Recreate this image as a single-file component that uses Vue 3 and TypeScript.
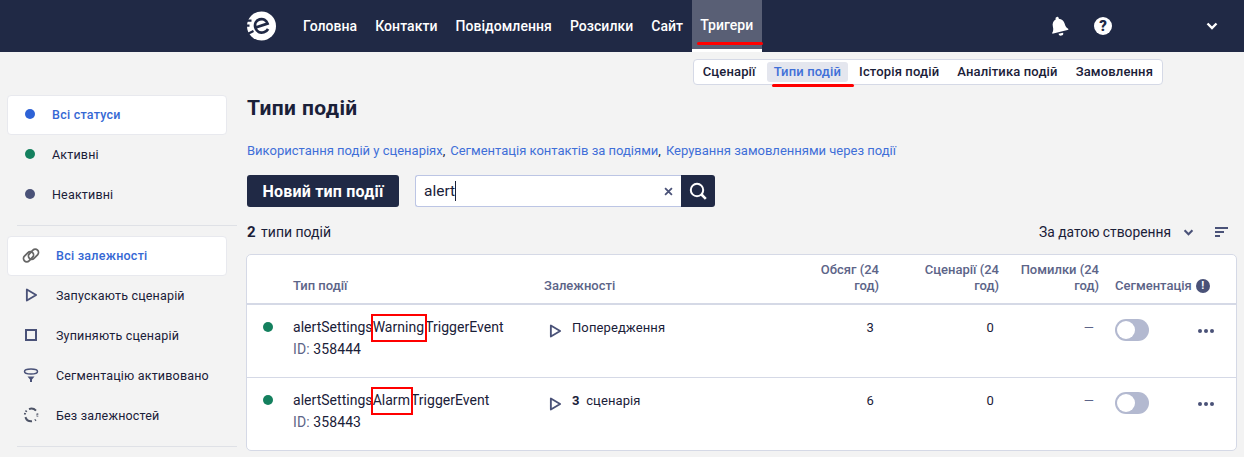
<script setup lang="ts">
// Trigger event types page: top nav, status/dependency filters, results table.
interface FilterItem {
  label: string;
  icon: string;
  active?: boolean;
}

interface EventRow {
  before: string;
  match: string;
  after: string;
  id: number;
  volume: number;
  scenarios: number;
}

const mainNav = ["Головна", "Контакти", "Повідомлення", "Розсилки", "Сайт"];
const subNav = ["Сценарії", "Типи подій", "Історія подій", "Аналітика подій", "Замовлення"];

const statuses: FilterItem[] = [
  { label: "Всі статуси", icon: "blue", active: true },
  { label: "Активні", icon: "green" },
  { label: "Неактивні", icon: "slate" },
];

const dependencies: FilterItem[] = [
  { label: "Всі залежності", icon: "link", active: true },
  { label: "Запускають сценарій", icon: "play" },
  { label: "Зупиняють сценарій", icon: "stop" },
  { label: "Сегментацію активовано", icon: "funnel" },
  { label: "Без залежностей", icon: "none" },
];

const rows: EventRow[] = [
  { before: "alertSettings", match: "Warning", after: "TriggerEvent", id: 358444, volume: 3, scenarios: 0 },
  { before: "alertSettings", match: "Alarm", after: "TriggerEvent", id: 358443, volume: 6, scenarios: 0 },
];
</script>

<template>
  <div class="page">
    <header class="topbar">
      <div class="topbar-inner">
        <svg class="logo" viewBox="0 0 32 32" width="32" height="32">
          <circle cx="16.500" cy="16" r="14.500" fill="#fff" />
          <g transform="rotate(-18 17 16)" fill="none" stroke="#202945" stroke-width="2.800">
            <path d="M10.500 15.500h12.500c0-4-2.700-6.500-6.300-6.500-3.800 0-6.500 2.900-6.500 6.800 0 4 2.800 6.700 6.700 6.700 2 0 3.600-.6 5-1.800" />
          </g>
          <path d="M0 9.500h6.500v2.200H0zM0 14.500h4.500v2.200H0zM1 23.500l7-3.500 1 2-7 3.500z" fill="#202945" />
        </svg>
        <nav class="main-nav">
          <a v-for="item in mainNav" :key="item">{{ item }}</a>
          <a class="current">Тригери<span class="mark-line nav-mark"></span></a>
        </nav>
        <div class="top-icons">
          <svg class="bell" viewBox="0 0 20 20" width="22" height="22">
            <g transform="rotate(-14 10 10)">
              <path d="M10 1.500a1.500 1.500 0 0 1 1.500 1.500v.5c2.600.7 4 2.900 4 5.500 0 3 .8 4.300 2 5.500v.8H2.500V14.500c1.200-1.200 2-2.500 2-5.500 0-2.600 1.400-4.800 4-5.500V3A1.500 1.500 0 0 1 10 1.500z" fill="#fff" />
              <path d="M7.800 16.800h4.400a2.200 2.200 0 0 1-4.400 0z" fill="#fff" />
            </g>
          </svg>
          <span class="help">?</span>
          <svg class="chevron-top" viewBox="0 0 12 8" width="12" height="8">
            <path d="M1.500 1.500 6 6l4.500-4.500" fill="none" stroke="#fff" stroke-width="2.400" />
          </svg>
        </div>
      </div>
    </header>

    <div class="subnav-row">
      <nav class="sub-nav">
        <a v-for="item in subNav" :key="item" :class="{ current: item === 'Типи подій' }">
          {{ item }}
          <span v-if="item === 'Типи подій'" class="mark-line sub-mark"></span>
        </a>
      </nav>
    </div>

    <div class="layout">
      <aside class="sidebar">
        <ul class="filter-list">
          <li v-for="f in statuses" :key="f.label" class="filter" :class="{ active: f.active }">
            <span class="dot" :class="f.icon"></span>
            <span>{{ f.label }}</span>
          </li>
        </ul>
        <hr class="divider" />
        <ul class="filter-list">
          <li v-for="f in dependencies" :key="f.label" class="filter dep" :class="{ active: f.active }">
            <span class="dep-icon">
              <svg v-if="f.icon === 'link'" viewBox="0 0 18 16" width="19" height="17" fill="none" stroke="#666" stroke-width="1.800">
                <rect x="0.800" y="6" width="11.500" height="6.500" rx="3.250" transform="rotate(-45 6.500 9.250)" />
                <rect x="5.700" y="3.500" width="11.500" height="6.500" rx="3.250" transform="rotate(-45 11.500 6.750)" />
              </svg>
              <svg v-else-if="f.icon === 'play'" viewBox="0 0 14 16" width="13" height="16" fill="none" stroke="#4a5278" stroke-width="2">
                <path d="M2 2v12l10-6z" stroke-linejoin="round" />
              </svg>
              <svg v-else-if="f.icon === 'stop'" viewBox="0 0 12 12" width="12" height="12" fill="none" stroke="#4a5278" stroke-width="2">
                <rect x="1" y="1" width="10" height="10" />
              </svg>
              <svg v-else-if="f.icon === 'funnel'" viewBox="0 0 16 16" width="16" height="16" fill="none" stroke="#4a5278">
                <ellipse cx="8" cy="4.500" rx="6.500" ry="2.500" stroke-width="1.500" />
                <path d="M4.500 9.500h7L9 12.500V15H7v-2.500z" fill="#4a5278" stroke="none" />
              </svg>
              <svg v-else viewBox="0 0 16 16" width="16" height="16" fill="none" stroke="#4d5366" stroke-width="2">
                <path d="M6 2.100A6.300 6.300 0 0 1 13 3.700" />
                <path d="M14.200 6.500a6.300 6.300 0 0 1 0 3" stroke-dasharray="1.200 1" />
                <path d="M12.800 12.600a6.300 6.300 0 0 1-1.800 1.300" stroke-dasharray="1.200 1" />
                <path d="M9 14.300a6.300 6.300 0 0 1-6.600-4.200" />
                <path d="M1.900 7.500a6.300 6.300 0 0 1 2.400-4.500" stroke-dasharray="1.500 1.200" />
              </svg>
            </span>
            <span>{{ f.label }}</span>
          </li>
        </ul>
        <hr class="divider" />
      </aside>

      <main class="content">
        <h1>Типи подій</h1>
        <p class="links">
          <a>Використання подій у сценаріях</a><b>,</b>
          <a>Сегментація контактів за подіями</a><b>,</b>
          <a>Керування замовленнями через події</a>
        </p>

        <div class="actions">
          <button class="primary">Новий тип події</button>
          <div class="search">
            <div class="search-field">
              <span class="search-text">alert</span><span class="caret"></span>
              <svg class="clear" viewBox="0 0 10 10" width="9" height="9">
                <path d="M1.200 1.200l7.600 7.600M8.800 1.200 1.200 8.800" stroke="#4a5278" stroke-width="2" />
              </svg>
            </div>
            <button class="search-btn" aria-label="search">
              <svg viewBox="0 0 18 18" width="18" height="18" fill="none" stroke="#fff" stroke-width="2">
                <circle cx="8" cy="8" r="6.200" />
                <path d="m12.500 12.500 4.300 4.300" stroke-width="2.600" />
              </svg>
            </button>
          </div>
        </div>

        <div class="summary">
          <span><b>2</b> типи подій</span>
          <div class="sort">
            <span>За датою створення</span>
            <svg viewBox="0 0 12 8" width="11" height="7">
              <path d="M1.500 1.500 6 6l4.500-4.500" fill="none" stroke="#4a5278" stroke-width="2.400" />
            </svg>
            <svg class="sort-lines" viewBox="0 0 14 10" width="14" height="10">
              <path d="M0 1h13M0 5h9M0 9h5" stroke="#4a5278" stroke-width="1.800" />
            </svg>
          </div>
        </div>

        <section class="table">
          <div class="grid head">
            <span></span>
            <span>Тип події</span>
            <span>Залежності</span>
            <span class="num narrow">Обсяг (24 год)</span>
            <span class="num">Сценарії (24 год)</span>
            <span class="num narrow">Помилки (24 год)</span>
            <span class="seg-head">Сегментація
              <span class="info">!</span>
            </span>
            <span></span>
          </div>
          <div v-for="row in rows" :key="row.id" class="grid row">
            <span class="dot green row-dot"></span>
            <div>
              <div class="event-name">{{ row.before }}<span class="hit">{{ row.match }}</span>{{ row.after }}</div>
              <div class="event-id"><span>ID:</span> {{ row.id }}</div>
            </div>
            <div class="dep-cell">
              <svg viewBox="0 0 14 16" width="13" height="16" fill="none" stroke="#4a5278" stroke-width="2">
                <path d="M2 2v12l10-6z" stroke-linejoin="round" />
              </svg>
              <span v-if="row.id === 358444">Попередження</span>
              <span v-else><b>3</b>&nbsp; сценарія</span>
            </div>
            <span class="value vol">{{ row.volume }}</span>
            <span class="value scen">{{ row.scenarios }}</span>
            <span class="value err">—</span>
            <span class="toggle"><span class="knob"></span></span>
            <span class="more"><i></i><i></i><i></i></span>
          </div>
        </section>
      </main>
    </div>
  </div>
</template>

<style>
html,
body {
  margin: 0;
  background: #f3f3f3;
  overflow: hidden;
}
</style>

<style scoped>
.page {
  font-family: Roboto, "Noto Sans", sans-serif;
  font-size: 13px;
  color: #1a2038;
  height: 457px;
  overflow: hidden;
}
.topbar {
  background: #202945;
  height: 52px;
}
.topbar-inner {
  display: flex;
  align-items: center;
  height: 52px;
  padding-left: 245px;
}
.logo {
  flex: none;
}
.main-nav {
  display: flex;
  height: 52px;
  margin-left: 26px;
  gap: 18px;
  align-items: stretch;
}
.main-nav a {
  display: flex;
  align-items: center;
  color: #fff;
  font-weight: 500;
  font-size: 14px;
  letter-spacing: 0.05px;
}
.main-nav a.current {
  position: relative;
  box-sizing: border-box;
  flex: none;
  width: 70px;
  background: #595f75;
  padding: 0 8px;
  margin-left: -9px;
  height: 49px;
  box-shadow: 0 3px 0 #fff;
}
.mark-line {
  position: absolute;
  display: block;
  height: 3px;
  background: #f00;
  border-radius: 2px;
}
.nav-mark {
  left: 5px;
  top: 42px;
  width: 66px;
}
.top-icons {
  display: flex;
  align-items: center;
  margin-left: auto;
  padding-right: 26px;
}
.bell {
  margin-right: 24px;
}
.help {
  width: 18px;
  height: 18px;
  border-radius: 50%;
  background: #fff;
  color: #202945;
  font-weight: 900;
  font-size: 15px;
  line-height: 18px;
  text-align: center;
  margin-right: 94px;
}
.subnav-row {
  display: flex;
  justify-content: flex-end;
  padding: 7px 81px 0 0;
}
.sub-nav {
  display: flex;
  align-items: center;
  height: 24px;
  padding: 0 1px;
  background: #fff;
  border: 1px solid #d5d9e6;
  border-radius: 4px;
}
.sub-nav a {
  position: relative;
  font-size: 13px;
  font-weight: 500;
  line-height: 20px;
  padding: 0 9px;
  border-radius: 3px;
  letter-spacing: 0.15px;
}
.sub-nav a:first-child {
  padding: 0 11px 0 8px;
}
.sub-nav a:last-child {
  padding-right: 8px;
}
.sub-nav a.current {
  background: #e4e6ee;
  color: #3f6fd8;
  padding: 0 7px;
  margin-right: 2px;
}
.sub-mark {
  left: 5px;
  top: 22px;
  width: 82px;
}
.layout {
  display: flex;
  margin-top: 10px;
}
.sidebar {
  width: 220px;
  margin-left: 7px;
  flex: none;
}
.filter-list {
  list-style: none;
  margin: 0;
  padding: 0;
}
.filter {
  display: flex;
  align-items: center;
  gap: 17px;
  height: 40px;
  padding: 0 0 2px 18px;
  box-sizing: border-box;
  border-radius: 4px;
  font-size: 12.500px;
  letter-spacing: 0.18px;
}
.filter.dep {
  padding-left: 15px;
  gap: 16px;
}
.filter.active {
  background: #fff;
  border: 1px solid #e8e9ee;
  color: #3568d4;
  font-weight: 500;
  padding-left: 17px;
  letter-spacing: 0.25px;
}
.filter.dep.active {
  padding-left: 14px;
}
.dep-icon {
  width: 18px;
  height: 18px;
  display: flex;
  align-items: center;
  justify-content: center;
}
.dot {
  width: 10px;
  height: 10px;
  border-radius: 50%;
  flex: none;
}
.dot.blue { background: #2d62d6; }
.dot.green { background: #14805e; }
.dot.slate { background: #4a5278; }
.divider {
  border: 0;
  border-top: 1px solid #dfe1e6;
  margin: 10px -10px 10px 10px;
}
.content {
  width: 990px;
  margin-left: 20px;
  flex: none;
}
h1 {
  font-size: 21px;
  font-weight: 700;
  line-height: 26px;
  margin: 0;
  letter-spacing: 0.4px;
}
.links {
  margin: 21px 0 0;
  line-height: 18px;
  font-size: 13px;
  color: #3f6fd8;
}
.links b {
  color: #1a2038;
  font-weight: 400;
  margin-right: 5px;
}
.actions {
  display: flex;
  align-items: center;
  margin-top: 15px;
}
.primary {
  width: 152px;
  height: 32px;
  background: #202945;
  color: #fff;
  border: 0;
  border-radius: 3px;
  font: inherit;
  font-size: 16px;
  font-weight: 700;
  letter-spacing: 0.2px;
}
.search {
  display: flex;
  margin-left: 16px;
}
.search-field {
  display: flex;
  align-items: center;
  width: 266px;
  height: 32px;
  box-sizing: border-box;
  background: #fff;
  border: 1px solid #bcc5e4;
  border-right: 0;
  padding-left: 8px;
  border-radius: 3px 0 0 3px;
  font-size: 15.500px;
}
.caret {
  display: inline-block;
  width: 1px;
  height: 20px;
  background: #1a2038;
}
.clear {
  margin-left: auto;
  margin-right: 8px;
}
.search-btn {
  width: 34px;
  height: 32px;
  border: 0;
  background: #202945;
  border-radius: 0 3px 3px 0;
  display: flex;
  align-items: center;
  justify-content: center;
  padding: 0;
}
.summary {
  display: flex;
  align-items: center;
  justify-content: space-between;
  margin-top: 15px;
  height: 20px;
  font-size: 14px;
}
.summary b {
  font-size: 15px;
  margin-right: 2px;
}
.sort {
  display: flex;
  align-items: center;
  padding-right: 8px;
  font-size: 13.800px;
}
.sort svg {
  margin-left: 12px;
}
.sort .sort-lines {
  margin-left: 21px;
}
.table {
  margin: 12px 0 0 -1px;
  background: #fff;
  border: 1px solid #d5d9e6;
  border-radius: 5px;
  height: 197px;
  box-sizing: border-box;
}
.grid {
  display: grid;
  grid-template-columns: 46px 251px 248px 87px 120px 100px 78px 1fr;
}
.head {
  height: 50px;
  align-items: end;
  padding-bottom: 9px;
  box-sizing: border-box;
  border-bottom: 2px solid #d5d9e6;
  color: #5c6488;
  font-weight: 500;
  font-size: 13px;
  line-height: 16px;
}
.head .num {
  text-align: right;
  padding-left: 30px;
}
.head .narrow {
  padding-left: 10px;
}
.seg-head {
  display: flex;
  align-items: center;
  gap: 4px;
  white-space: nowrap;
  padding-left: 16px;
}
.info {
  display: inline-block;
  width: 14px;
  height: 14px;
  flex: none;
  border-radius: 50%;
  background: #4a5278;
  color: #fff;
  font-size: 11px;
  font-weight: 700;
  line-height: 14px;
  text-align: center;
}
.row {
  height: 73px;
  box-sizing: border-box;
  border-bottom: 1px solid #d5d9e6;
  padding-top: 11px;
  font-size: 13px;
  letter-spacing: 0.1px;
}
.row:last-child {
  border-bottom: 0;
}
.row-dot {
  margin: 6px 0 0 16px;
}
.event-name {
  line-height: 20px;
  margin-top: 1px;
  font-size: 14px;
  letter-spacing: 0.03px;
}
.hit {
  outline: 2px solid #f00;
  padding: 3px 1px 5px 0;
}
.event-id {
  line-height: 20px;
  margin-top: 2px;
  font-size: 14px;
  letter-spacing: 0.1px;
}
.event-id span {
  color: #5c6488;
}
.dep-cell {
  display: flex;
  gap: 10px;
  align-items: flex-start;
  padding: 3px 0 0 5px;
  line-height: 18px;
}
.dep-cell svg {
  margin-top: 4px;
}
.value {
  text-align: right;
  line-height: 20px;
  margin-top: 2px;
}
.vol { padding-right: 5px; }
.scen { padding-right: 5px; }
.err { padding-right: 5px; color: #5c6488; }
.toggle {
  position: relative;
  display: block;
  width: 34px;
  height: 22px;
  border-radius: 11px;
  background: #b3b9d0;
  margin: 3px 0 0 16px;
}
.knob {
  position: absolute;
  left: 2px;
  top: 2px;
  width: 18px;
  height: 18px;
  border-radius: 50%;
  background: #fff;
}
.more {
  display: flex;
  gap: 2px;
  padding: 13px 0 0 21px;
}
.more i {
  width: 4px;
  height: 4px;
  border-radius: 50%;
  background: #4a5278;
}
</style>
